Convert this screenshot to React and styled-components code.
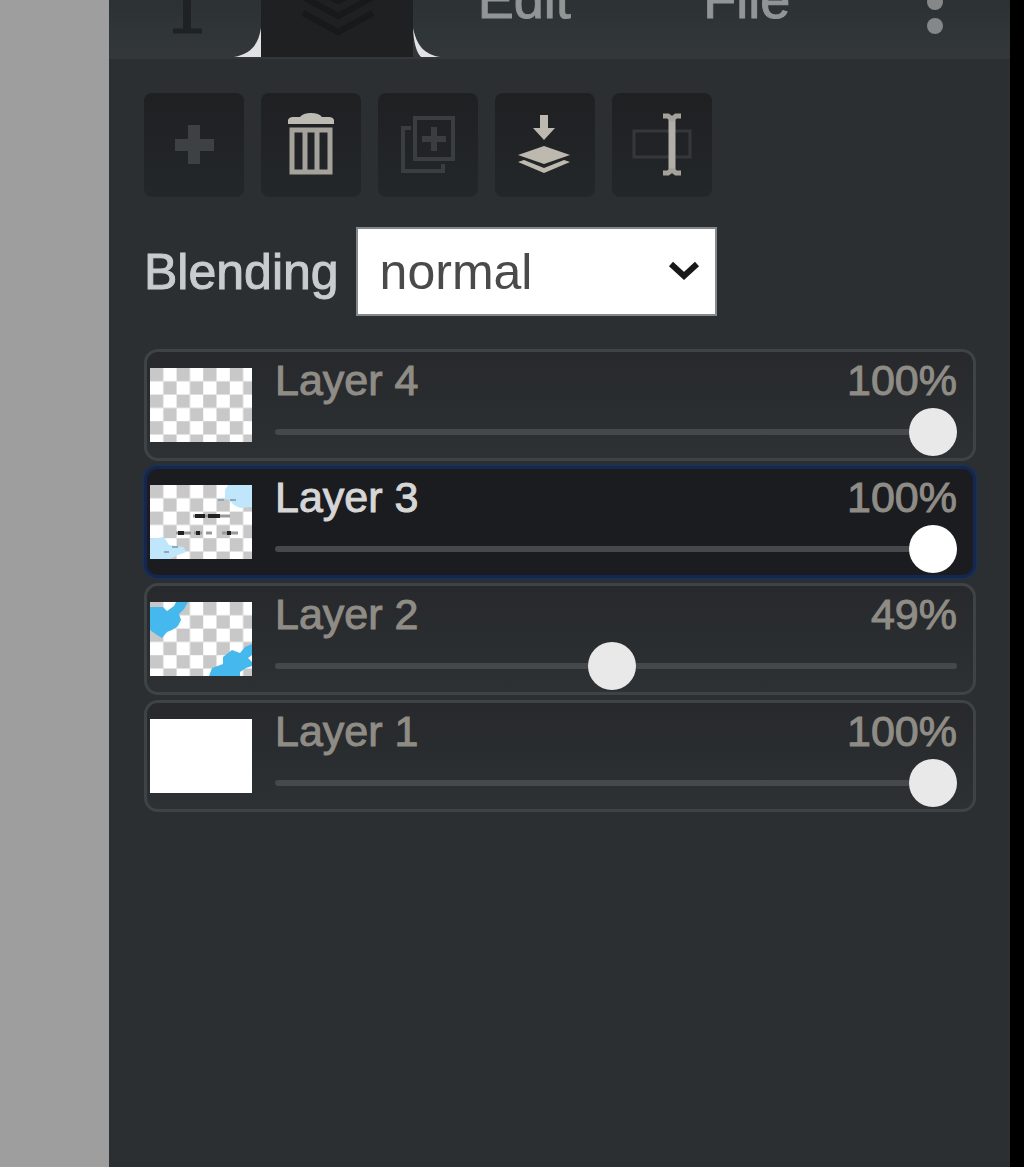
import React, { useState } from 'react'
import styled, { createGlobalStyle } from 'styled-components'

const initialLayers = [
    { id: 4, name: 'Layer 4', opacity: 100 },
    { id: 3, name: 'Layer 3', opacity: 100 },
    { id: 2, name: 'Layer 2', opacity: 49.4 },
    { id: 1, name: 'Layer 1', opacity: 100 },
]

const TextIcon = () => (
    <svg width="60" height="100" viewBox="0 0 60 100" aria-hidden="true">
        <path d="M12 32V14h40v18M32 14v68" fill="none" stroke="#1e2223" strokeWidth="8" />
        <path d="M18 82h29" stroke="#1e2223" strokeWidth="5" />
    </svg>
)

const LayersIcon = () => (
    <svg width="80" height="90" viewBox="0 0 80 90" fill="none" stroke="#17191b" strokeWidth="6" aria-hidden="true">
        <path d="M41 11L77 29L41 47L5 29Z" fill="#17191b" />
        <path d="M6 43L41 62L76 43" />
        <path d="M6 59L41 78L76 59" />
    </svg>
)

const DotsIcon = () => (
    <svg width="18" height="76" viewBox="0 0 18 76" fill="#858889" aria-hidden="true">
        <circle cx="10" cy="17" r="8" />
        <circle cx="10" cy="41" r="8" />
        <circle cx="10" cy="65" r="8" />
    </svg>
)

const AddIcon = () => (
    <svg width="60" height="64" viewBox="0 0 60 64" aria-hidden="true">
        <path d="M30 12v39M11 32h39" stroke="#3e4143" strokeWidth="12" strokeLinejoin="round" />
    </svg>
)

const TrashIcon = () => (
    <svg width="60" height="64" viewBox="0 0 60 64" aria-hidden="true">
        <path d="M7 11V7Q8 4 12 4H19Q22 0 30 0T41 4H48Q52 4 53 7V11Z" fill="#bdbab2" />
        <path d="M11 17H49V59H11Z" fill="none" stroke="#a5a29b" strokeWidth="5" />
        <path d="M24 18v40M36 18v40" stroke="#a5a29b" strokeWidth="5" />
    </svg>
)

const DuplicateIcon = () => (
    <svg width="60" height="64" viewBox="0 0 60 64" fill="none" stroke="#3a3e41" strokeWidth="4" aria-hidden="true">
        <path d="M17 5H55V46H17Z" />
        <path d="M13 15H5V58H45V51" />
        <path d="M36 14v24M24 26h24" strokeWidth="6" />
    </svg>
)

const MergeIcon = () => (
    <svg width="60" height="64" viewBox="0 0 60 64" fill="#bdb9ae" aria-hidden="true">
        <path d="M25 2H33V15H40L29 27L18 15H25Z" />
        <path d="M29 33L55 42L29 51L3 42Z" />
        <path d="M3 49L9 47L29 55L49 47L55 49L29 60Z" />
    </svg>
)

const RenameIcon = () => (
    <svg width="60" height="64" viewBox="0 0 60 64" fill="none" aria-hidden="true">
        <path d="M2 18H58V44H2Z" stroke="#34383b" strokeWidth="3" />
        <path d="M40 6V57" stroke="#b2afa8" strokeWidth="7" />
        <path d="M31 3H36L40 6L44 3H49M31 60H36L40 57L44 60H49" stroke="#a5a29b" strokeWidth="5" />
    </svg>
)

const Checker = () => (
    <>
        <defs>
            <pattern id="checker" width="26.6" height="26.6" patternUnits="userSpaceOnUse">
                <rect width="26.6" height="26.6" fill="#fff" />
                <path d="M0 0h13.3v13.3H0zM13.3 13.3h13.3v13.3H13.3z" fill="#c8c8c8" />
            </pattern>
        </defs>
        <rect width="102" height="74" fill="url(#checker)" />
    </>
)

const Thumbnail = ({ id }) => (
    <Thumb viewBox="0 0 102 74" aria-hidden="true">
        {id === 1 ? <rect width="102" height="74" fill="#fff" /> : <Checker />}
        {id === 3 && (
            <>
                <path d="M78 0H102V22L90 23L84 20L79 15L75 14V5Z" fill="#bfe6fb" />
                <path d="M0 54L14 52L19 60L34 62L36 67L28 70L20 74H0Z" fill="#bfe6fb" />
                <path d="M68 15h6M80 15h6M22 62h6M14 67h5" stroke="#90a9b8" strokeWidth="2" />
                <path d="M43 31H80M26 48H41M44 48H52M56 48H62M72 48H88" stroke="#999" strokeWidth="3" />
                <path d="M45 31H55M58 31H70M28 48H34M46 48H50M77 48H81" stroke="#222" strokeWidth="4" />
            </>
        )}
        {id === 2 && (
            <>
                <path d="M0 5L13 5L17 9L24 4L26 0H38L34 7L29 12L31 18L28 24L22 28L17 30L12 36L7 33L0 28Z" fill="#45b8ee" />
                <path d="M59 74L62 66L73 62L73 55L82 48L90 51L95 45L102 42V53L98 56L102 60V64L96 66L90 70L90 74Z" fill="#45b8ee" />
            </>
        )}
    </Thumb>
)

const App = () => {

    const [layers, setLayers] = useState(initialLayers)
    const [activeId, setActiveId] = useState(3)
    const [blending, setBlending] = useState('normal')

    const onOpacity = (id, value) => {
        setLayers(layers.map((l) => l.id === id ? { ...l, opacity: Number(value) } : l))
    }

    const renderLayer = (layer) => {
        const isActive = layer.id === activeId
        return (
            <LayerRow key={layer.id} $active={isActive} onClick={() => setActiveId(layer.id)}>
                <Thumbnail id={layer.id} />
                <LayerBody>
                    <LayerHead>
                        <LayerName htmlFor={`opacity-${layer.id}`} $active={isActive}>{layer.name}</LayerName>
                        <Opacity>{Math.round(layer.opacity)}%</Opacity>
                    </LayerHead>
                    <Slider
                        id={`opacity-${layer.id}`}
                        type="range"
                        min="0"
                        max="100"
                        step="any"
                        $active={isActive}
                        value={layer.opacity}
                        onChange={(e) => onOpacity(layer.id, e.target.value)}
                    />
                </LayerBody>
            </LayerRow>
        )
    }

    return (
        <Page>
            <GlobalStyle />
            <Panel>
                <Tabs>
                    <IconTab aria-label="Text"><TextIcon /></IconTab>
                    <IconTab $active aria-label="Layers">
                        <LayersIcon />
                        <Corner $side="left" viewBox="0 0 27 29" aria-hidden="true">
                            <path d="M27 0V29H0C16 26 24 18 27 0Z" fill="#e0e2e3" />
                        </Corner>
                        <Corner $side="right" viewBox="0 0 27 29" aria-hidden="true">
                            <path d="M0 0C4 18 11 26 27 29H8Q1 22 0 0Z" fill="#e0e2e3" />
                        </Corner>
                    </IconTab>
                    <TextTab>Edit</TextTab>
                    <TextTab>File</TextTab>
                    <IconTab aria-label="More"><DotsIcon /></IconTab>
                </Tabs>
                <Content>
                    <Toolbar>
                        <ToolButton disabled aria-label="Add layer"><AddIcon /></ToolButton>
                        <ToolButton aria-label="Delete layer"><TrashIcon /></ToolButton>
                        <ToolButton disabled aria-label="Duplicate layer"><DuplicateIcon /></ToolButton>
                        <ToolButton aria-label="Merge down"><MergeIcon /></ToolButton>
                        <ToolButton aria-label="Rename layer"><RenameIcon /></ToolButton>
                    </Toolbar>
                    <BlendRow>
                        <BlendLabel htmlFor="blending">Blending</BlendLabel>
                        <SelectWrapper>
                            <Select id="blending" value={blending} onChange={(e) => setBlending(e.target.value)}>
                                <option>normal</option>
                                <option>multiply</option>
                                <option>screen</option>
                            </Select>
                            <Chevron viewBox="0 0 32 20" aria-hidden="true">
                                <path d="M3 3L16 15L29 3" fill="none" stroke="#181818" strokeWidth="6" />
                            </Chevron>
                        </SelectWrapper>
                    </BlendRow>
                    <LayerList>{layers.map(renderLayer)}</LayerList>
                </Content>
            </Panel>
        </Page>
    )
}

const GlobalStyle = createGlobalStyle`
    * {
        box-sizing: border-box;
    }

    body {
        margin: 0;
        font-family: "Liberation Sans", Arial, sans-serif;
    }

    button {
        padding: 0;
        border: 0;
        font-family: inherit;
    }
`

const Page = styled.div`
    min-height: 100vh;
    display: flex;
    padding: 0 14px 0 109px;
    background: linear-gradient(to right, #9e9e9e 50%, #000 50%);
`

const Panel = styled.main`
    flex: 1;
    min-width: 0;
    background: #2b2f32;
`

const Tabs = styled.nav`
    height: 59px;
    display: flex;
    align-items: flex-end;
    padding-bottom: 2px;
    overflow: hidden;
    background: linear-gradient(#2c3234, #333739);
`

const IconTab = styled.button`
    position: relative;
    width: 152px;
    height: 116px;
    flex: none;
    display: flex;
    align-items: center;
    justify-content: center;
    background: ${(p) => p.$active ? '#1e2022' : 'transparent'};
`

const TextTab = styled.button`
    height: 116px;
    flex: 1;
    background: transparent;
    color: #929596;
    font-size: 54px;
    -webkit-text-stroke: 1px;
`

const Corner = styled.svg`
    position: absolute;
    bottom: 0;
    ${(p) => p.$side}: -27px;
    width: 27px;
    height: 29px;
`

const Content = styled.div`
    padding: 34px 34px 34px 35px;
`

const Toolbar = styled.div`
    display: flex;
    gap: 17px;
`

const ToolButton = styled.button`
    width: 100px;
    height: 104px;
    display: flex;
    align-items: center;
    justify-content: center;
    border-radius: 8px;
    background: linear-gradient(#1e2022, #24272a);
`

const BlendRow = styled.div`
    display: flex;
    align-items: center;
    gap: 17px;
    margin-top: 30px;
`

const BlendLabel = styled.label`
    color: #c9cccd;
    font-size: 50px;
    -webkit-text-stroke: 1px;
`

const SelectWrapper = styled.div`
    position: relative;
    width: 361px;
`

const Select = styled.select`
    width: 100%;
    height: 89px;
    padding: 0 22px;
    border: 2px solid #85888a;
    border-radius: 0;
    appearance: none;
    background: #fff;
    color: #4a4a4a;
    font-family: inherit;
    font-size: 50px;
`

const Chevron = styled.svg`
    position: absolute;
    top: 34px;
    right: 17px;
    width: 32px;
    height: 20px;
    pointer-events: none;
`

const LayerList = styled.div`
    display: flex;
    flex-direction: column;
    gap: 5px;
    margin-top: 33px;
`

const LayerRow = styled.div`
    height: 112px;
    display: flex;
    align-items: center;
    gap: 23px;
    padding: 0 16px 0 3px;
    border: 3px solid ${(p) => p.$active ? '#152650' : '#3e4346'};
    border-radius: 14px;
    background: ${(p) => p.$active ? '#1b1c1f' : 'linear-gradient(#27292c, #2d3133)'};
    box-shadow: ${(p) => p.$active ? '0 0 0 2px #1f3049' : 'none'};
`

const Thumb = styled.svg`
    width: 102px;
    height: 74px;
    flex: none;
`

const LayerBody = styled.div`
    flex: 1;
    min-width: 0;
`

const LayerHead = styled.div`
    display: flex;
    justify-content: space-between;
    font-size: 43px;
    line-height: 54px;
    -webkit-text-stroke: 1px;
`

const LayerName = styled.label`
    color: ${(p) => p.$active ? '#d6d6d6' : '#8f8c86'};
`

const Opacity = styled.span`
    color: #8f8c86;
`

const Slider = styled.input`
    width: 100%;
    height: 50px;
    display: block;
    margin: 0;
    appearance: none;
    background: transparent;

    &::-webkit-slider-runnable-track {
        height: 6px;
        border-radius: 3px;
        background: #45494c;
    }

    &::-webkit-slider-thumb {
        width: 48px;
        height: 48px;
        margin-top: -21px;
        appearance: none;
        border-radius: 50%;
        background: ${(p) => p.$active ? '#fff' : '#e9e9e9'};
    }
`

export default App
